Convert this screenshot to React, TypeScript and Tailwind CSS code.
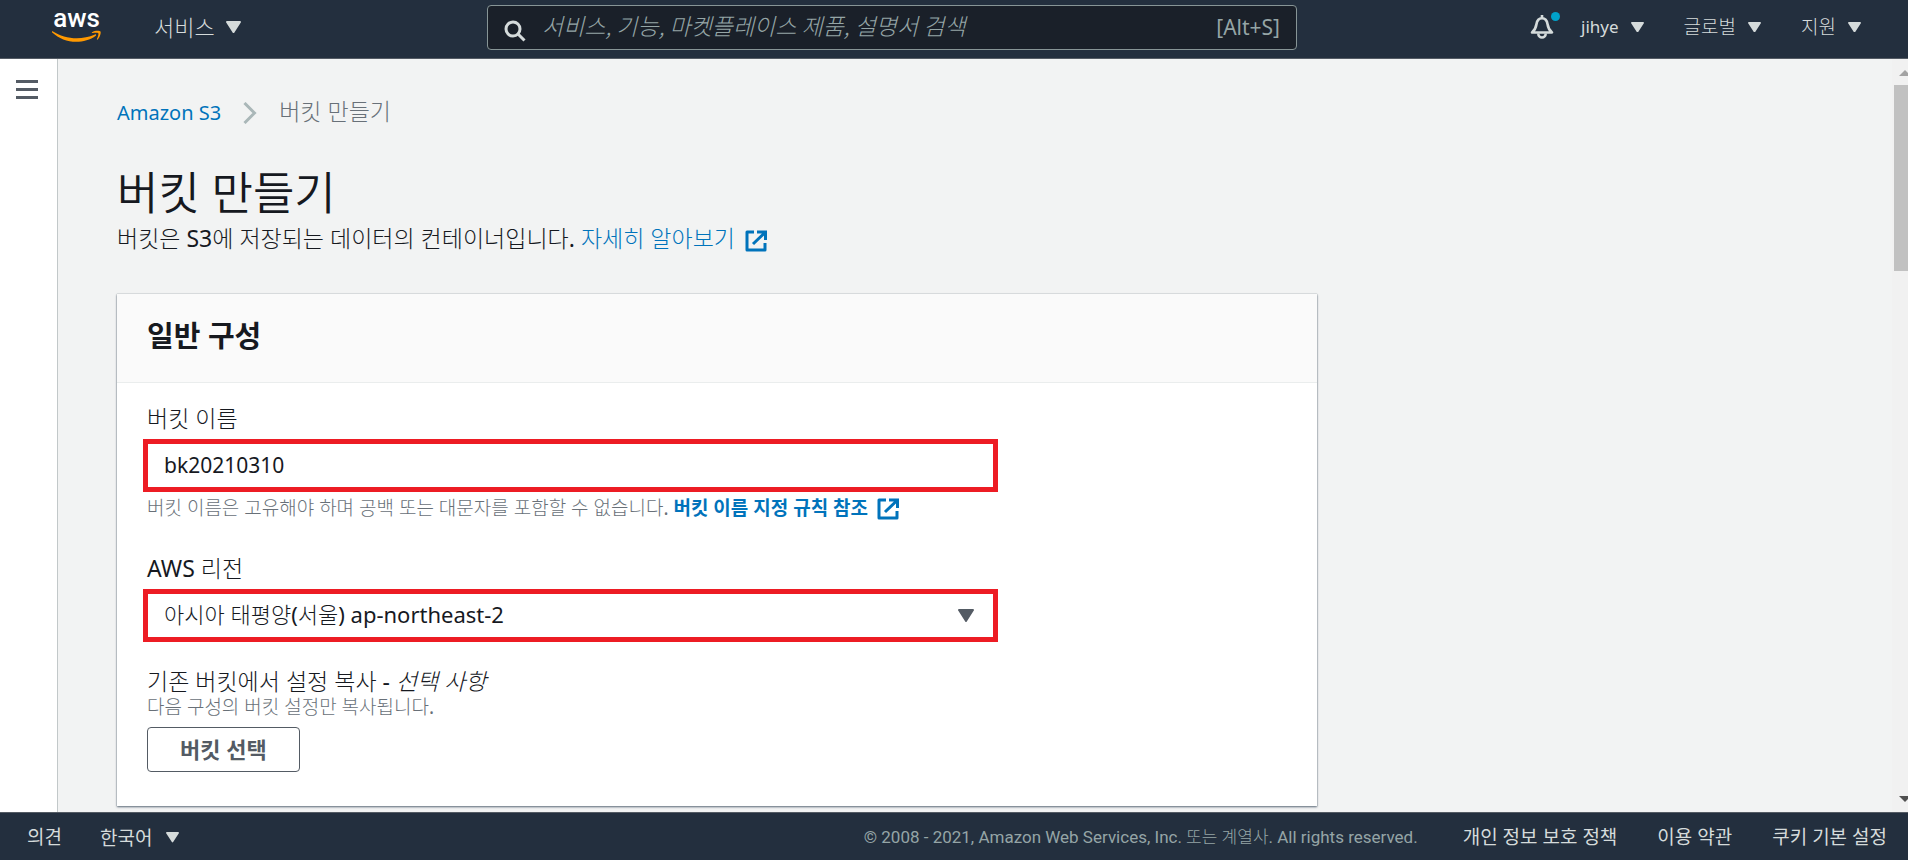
import { useState } from 'react';
import type { ReactNode } from 'react';

const footerLinks = ['개인 정보 보호 정책', '이용 약관', '쿠키 기본 설정'];

const regions = [
  { value: 'ap-northeast-2', label: '아시아 태평양(서울) ap-northeast-2' },
  { value: 'ap-northeast-1', label: '아시아 태평양(도쿄) ap-northeast-1' },
  { value: 'us-east-1', label: '미국 동부(버지니아 북부) us-east-1' },
];

// regular latin with thin hangul strokes
const thin = "font-['Noto_Sans','Noto_Sans_CJK_KR_Light','Noto_Sans_CJK_KR',sans-serif]";
// hangul only, spaces and commas from the same face
const thinHangul = "font-['Noto_Sans_CJK_KR_Light','Noto_Sans_CJK_KR',sans-serif]";

const Caret = ({ className = 'w-[13px]' }: { className?: string }) => (
  <svg viewBox="0 0 16 13" className={`shrink-0 ${className}`} fill="currentColor" aria-hidden="true">
    <path d="M1 0h14a1 1 0 0 1 .8 1.6l-7 10.800a1 1 0 0 1-1.600 0L.2 1.600A1 1 0 0 1 1 0Z" />
  </svg>
);

const AwsLogo = () => (
  <svg viewBox="0 -11 50 43" className="h-[43px] w-[50px]" role="img" aria-label="AWS">
    <text x="24.500" y="16" textAnchor="middle" fill="#fff" fontFamily="Roboto, sans-serif" fontWeight="500" fontSize="26">
      aws
    </text>
    <path d="M.6 20.200c7 4.600 15.500 7 24.200 7 6 0 12.200-1.300 18.200-3.800.9-.4 1.700.6.8 1.300-5.300 4-12.900 6.100-19.500 6.100C15.100 30.800 6.700 27.300.2 21.400c-.6-.6-.2-1.500.4-1.200Z" fill="#ff9900" />
    <path d="M46.300 22.200c-.7-.9-4.400-.4-6.100-.2-.5.1-.6-.4-.1-.7 3-2.100 7.800-1.500 8.400-.8.600.7-.1 5.600-2.900 8-.4.4-.9.200-.7-.3.6-1.600 2.100-5.100 1.400-6Z" fill="#ff9900" />
  </svg>
);

const BellIcon = () => (
  <svg viewBox="0 0 24 24" className="size-6" fill="none" stroke="currentColor" strokeWidth="2.600" aria-hidden="true">
    <path d="M12 0v3" />
    <path d="M2 17.500c3-2.500 4-5 4.500-8.500C7 5.500 9 3.200 12 3.200s5 2.300 5.500 5.800c.5 3.500 1.500 6 4.500 8.500Z" strokeLinejoin="round" />
    <path d="M8.300 18.500a3.700 4 0 0 0 7.400 0" />
  </svg>
);

const SearchIcon = () => (
  <svg viewBox="0 0 22 22" className="size-[22px] shrink-0" fill="none" stroke="currentColor" strokeWidth="3" aria-hidden="true">
    <circle cx="9" cy="9" r="7" />
    <path d="m14 14 6.500 6.500" />
  </svg>
);

const ExternalIcon = () => (
  <svg viewBox="0 0 22 22" className="ml-1 inline-block size-[22px] align-[-5px]" fill="none" stroke="currentColor" strokeWidth="3" aria-hidden="true">
    <path d="M9 2H2v18h18v-7" strokeLinejoin="round" />
    <path d="M12 2h8.500v8M20 2.500 8 14" />
  </svg>
);

const NavButton = ({ children, className = 'gap-3 text-[19px]' }: { children: ReactNode; className?: string }) => (
  <button type="button" className={`flex items-center whitespace-nowrap leading-6 ${className}`}>
    {children}
  </button>
);

const Header = () => (
  <header className={`flex h-[59px] shrink-0 items-start border-b border-[#545b64] bg-[#232f3e] pr-[47px] pl-[52px] text-[#d5dbdb] ${thin}`}>
    <div className="flex w-[435px] shrink-0 items-end">
      <a href="#home">
        <AwsLogo />
      </a>
      <NavButton className="mb-1 ml-[52px] gap-[11px] text-[22px]">
        서비스
        <Caret className="w-[15px]" />
      </NavButton>
    </div>

    <label className="mt-[5px] flex h-[45px] w-[810px] items-center rounded-sm border border-[#879596] bg-[#1a2029] px-4">
      <span className="pt-1.5">
        <SearchIcon />
      </span>
      <input
        type="search"
        aria-label="검색"
        placeholder="서비스, 기능, 마켓플레이스 제품, 설명서 검색"
        className={`ml-4 min-w-0 flex-1 bg-transparent pb-1 text-[23px] outline-none placeholder:text-[#95a5a6] placeholder:italic ${thinHangul}`}
      />
      <span className="text-[21px] text-[#95a5a6]">[Alt+S]</span>
    </label>

    <div className="flex flex-1 items-center justify-end pt-[15px]">
      <button type="button" aria-label="알림" className="relative mr-[27px]">
        <BellIcon />
        <span className="absolute -top-[3px] -right-1.5 size-[9px] rounded-full bg-[#00a1c9]" />
      </button>
      <div className="flex items-center gap-10">
        <NavButton className="gap-3 text-[17px]">
          jihye
          <Caret />
        </NavButton>
        <NavButton>
          글로벌
          <Caret />
        </NavButton>
        <NavButton>
          지원
          <Caret />
        </NavButton>
      </div>
    </div>
  </header>
);

const Scrollbar = () => (
  <div className="flex w-4 shrink-0 flex-col items-end overflow-hidden bg-[#f1f1f1] pt-[11px] pb-2.5" aria-hidden="true">
    <svg viewBox="0 0 12 6" className="-mr-[3px] h-1.5 w-3" fill="#a3a3a3">
      <path d="M6 0 12 6H0Z" />
    </svg>
    <div className="mt-[9px] mb-auto h-[186px] w-3.5 bg-[#c1c1c1]" />
    <svg viewBox="0 0 12 6" className="-mr-[3px] h-1.5 w-3" fill="#505050">
      <path d="M0 0h12L6 6Z" />
    </svg>
  </div>
);

const BucketForm = () => {
  const [name, setName] = useState('bk20210310');
  const [region, setRegion] = useState('ap-northeast-2');

  return (
    <section className="mt-10 max-w-[1200px] bg-white shadow-[0_1px_2px_0_#5f6b7a,0_0_1px_0_#879596]">
      <div className="border-b border-[#eaeded] bg-[#fafafa] px-[30px] pt-[22px] pb-[26px]">
        <h2 className="text-[29px] leading-10 font-bold">일반 구성</h2>
      </div>

      <div className="px-[30px] pt-[21px] pb-[34px]">
        <label htmlFor="bucket-name" className={`block text-[23px] leading-7 ${thin}`}>
          버킷 이름
        </label>
        <input
          id="bucket-name"
          value={name}
          onChange={(e) => setName(e.target.value)}
          className="-ml-1 mt-[7px] block h-[53px] w-[855px] border-5 border-[#ed1c24] bg-white px-4 pb-0.5 text-[21px] outline-none"
        />
        <p className="mt-1 text-[19px] leading-6 text-[#687078]">
          <span className={thin}>버킷 이름은 고유해야 하며 공백 또는 대문자를 포함할 수 없습니다.</span>{' '}
          <a href="#rules" className="font-bold text-[#0073bb]">
            버킷 이름 지정 규칙 참조 <ExternalIcon />
          </a>
        </p>

        <label htmlFor="region" className={`mt-[34px] block text-[23px] leading-7 ${thin}`}>
          AWS 리전
        </label>
        <div className="relative -ml-1 mt-[7px] w-[855px]">
          <select
            id="region"
            value={region}
            onChange={(e) => setRegion(e.target.value)}
            className={`block h-[53px] w-full appearance-none border-5 border-[#ed1c24] bg-white px-4 pb-0.5 text-[22px] outline-none ${thin}`}
          >
            {regions.map((r) => (
              <option key={r.value} value={r.value}>
                {r.label}
              </option>
            ))}
          </select>
          <span className="pointer-events-none absolute inset-y-0 right-6 flex items-center text-[#545b64]">
            <Caret className="w-4" />
          </span>
        </div>

        <h3 className={`mt-[25px] text-[23px] leading-7 ${thin}`}>
          기존 버킷에서 설정 복사 - <i>선택 사항</i>
        </h3>
        <p className={`text-[19px] leading-6 text-[#687078] ${thin}`}>다음 구성의 버킷 설정만 복사됩니다.</p>
        <button
          type="button"
          className="mt-2 h-[45px] rounded-sm border border-[#545b64] px-8 pb-0.5 text-[22px] leading-7 font-bold text-[#545b64]"
        >
          버킷 선택
        </button>
      </div>
    </section>
  );
};

const Footer = () => (
  <footer className="flex h-12 shrink-0 items-center border-t border-[#545b64] bg-[#232f3e] pt-0.5 pr-[21px] pl-[27px] text-[19px] text-[#d5dbdb]">
    <a href="#feedback">의견</a>
    <NavButton className="ml-[38px] gap-3.5">
      한국어
      <Caret />
    </NavButton>
    <p className="ml-auto font-[Roboto,'Noto_Sans_CJK_KR_Light','Noto_Sans_CJK_KR',sans-serif] text-[17px] text-[#95a5a6]">
      © 2008 - 2021, Amazon Web Services, Inc. 또는 계열사. All rights reserved.
    </p>
    <nav className="ml-[45px] flex gap-10">
      {footerLinks.map((link) => (
        <a key={link} href="#legal">
          {link}
        </a>
      ))}
    </nav>
  </footer>
);

const App = () => (
  <div className="flex h-screen flex-col overflow-hidden font-['Noto_Sans','Noto_Sans_CJK_KR',sans-serif] text-[#16191f]">
    <Header />

    <div className="flex min-h-0 flex-1 bg-[#f2f3f3]">
      <aside className="w-[58px] shrink-0 border-r border-[#c2c8c9] bg-white pt-[21px] pl-4">
        <button type="button" aria-label="메뉴" className="flex flex-col gap-[5px]">
          <span className="h-[3px] w-[22px] bg-[#545b64]" />
          <span className="h-[3px] w-[22px] bg-[#545b64]" />
          <span className="h-[3px] w-[22px] bg-[#545b64]" />
        </button>
      </aside>

      <main className="min-w-0 flex-1 overflow-hidden px-[59px] pt-[38px]">
        <nav className={`flex items-center text-[23px] leading-8 text-[#687078] ${thin}`}>
          <a href="#s3" className="text-[20px] text-[#0073bb]">
            Amazon S3
          </a>
          <svg viewBox="0 0 14 22" className="mx-[22px] h-[22px] w-3.5" fill="none" stroke="#aab7b8" strokeWidth="3" aria-hidden="true">
            <path d="m1.500 1 10 10-10 10" />
          </svg>
          <span className="-mt-1">버킷 만들기</span>
        </nav>

        <h1 className="mt-9 font-['Noto_Sans','Noto_Sans_CJK_KR_DemiLight','Noto_Sans_CJK_KR_Light',sans-serif] text-[45px] leading-[56px]">
          버킷 만들기
        </h1>
        <p className={`mt-px text-[23px] leading-8 ${thin}`}>
          버킷은 S3에 저장되는 데이터의 컨테이너입니다.{' '}
          <a href="#learn" className="text-[#0073bb]">
            자세히 알아보기 <ExternalIcon />
          </a>
        </p>

        <BucketForm />
      </main>

      <Scrollbar />
    </div>

    <Footer />
  </div>
);

export default App;
